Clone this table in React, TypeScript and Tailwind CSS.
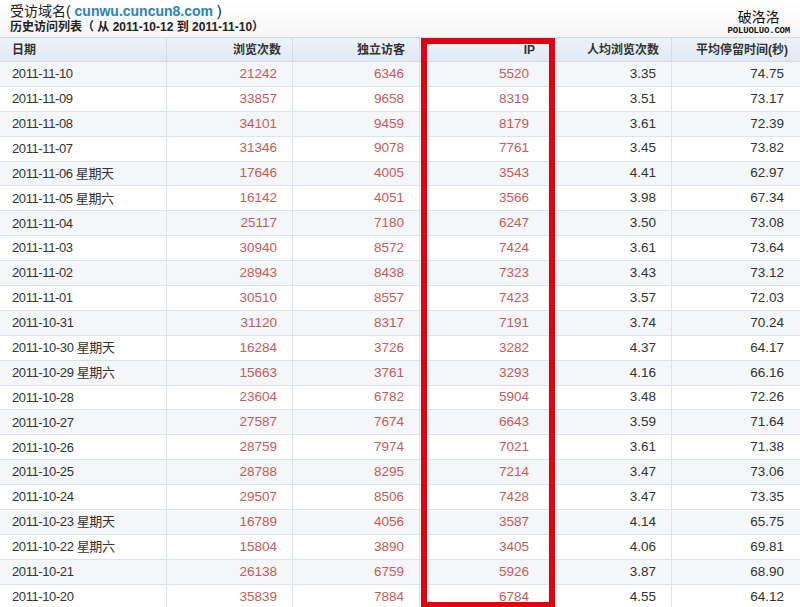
import React from 'react';

const rows: [string, string, string, string, string, string][] = [
  ['2011-11-10', '21242', '6346', '5520', '3.35', '74.75'],
  ['2011-11-09', '33857', '9658', '8319', '3.51', '73.17'],
  ['2011-11-08', '34101', '9459', '8179', '3.61', '72.39'],
  ['2011-11-07', '31346', '9078', '7761', '3.45', '73.82'],
  ['2011-11-06 星期天', '17646', '4005', '3543', '4.41', '62.97'],
  ['2011-11-05 星期六', '16142', '4051', '3566', '3.98', '67.34'],
  ['2011-11-04', '25117', '7180', '6247', '3.50', '73.08'],
  ['2011-11-03', '30940', '8572', '7424', '3.61', '73.64'],
  ['2011-11-02', '28943', '8438', '7323', '3.43', '73.12'],
  ['2011-11-01', '30510', '8557', '7423', '3.57', '72.03'],
  ['2011-10-31', '31120', '8317', '7191', '3.74', '70.24'],
  ['2011-10-30 星期天', '16284', '3726', '3282', '4.37', '64.17'],
  ['2011-10-29 星期六', '15663', '3761', '3293', '4.16', '66.16'],
  ['2011-10-28', '23604', '6782', '5904', '3.48', '72.26'],
  ['2011-10-27', '27587', '7674', '6643', '3.59', '71.64'],
  ['2011-10-26', '28759', '7974', '7021', '3.61', '71.38'],
  ['2011-10-25', '28788', '8295', '7214', '3.47', '73.06'],
  ['2011-10-24', '29507', '8506', '7428', '3.47', '73.35'],
  ['2011-10-23 星期天', '16789', '4056', '3587', '4.14', '65.75'],
  ['2011-10-22 星期六', '15804', '3890', '3405', '4.06', '69.81'],
  ['2011-10-21', '26138', '6759', '5926', '3.87', '68.90'],
  ['2011-10-20', '35839', '7884', '6784', '4.55', '64.12'],
];

const cols = 'grid grid-cols-[167px_126px_127px_135px_117px_128px]';
const font = { cjk: "font-['Liberation_Sans','Noto_Sans_CJK_SC',sans-serif]" };

export default function App() {
  return (
    <div className={`relative w-[800px] h-[607px] overflow-hidden bg-white ${font.cjk}`}>
      {/* title */}
      <div className="relative h-[37px] bg-gradient-to-b from-white to-[#f6f6f6] pl-[10px] pt-[3px]">
        <div className="text-[14px] leading-[16px] text-[#222]">
          受访域名(<span className="font-bold text-[#2b84b8]"> cunwu.cuncun8.com </span>)
        </div>
        <div className="mt-[1px] text-[12px] leading-[14px] font-bold text-[#222]">
          历史访问列表（ 从 2011-10-12 到 2011-11-10）
        </div>
        <div className="absolute right-[10px] top-[9px] flex flex-col items-center">
          <span className="text-[14px] leading-[16px] text-[#111]">破洛洛</span>
          <span className="mt-[1px] font-['Liberation_Mono',monospace] text-[9px] leading-[10px] font-bold tracking-[-0.2px] text-[#111]">POLUOLUO.COM</span>
        </div>
      </div>

      {/* header */}
      <div className={`${cols} h-[25px] border-y border-[#cfd9e6] bg-gradient-to-b from-[#eef3f9] to-[#e1e9f3] text-[12px] font-bold text-[#333]`}>
        <div className="flex items-center pl-[12px] border-r border-[#d3dce8]">日期</div>
        <div className="flex items-center justify-end pr-[11px] border-r border-[#d3dce8]">浏览次数</div>
        <div className="flex items-center justify-end pr-[14px] border-r border-[#d3dce8]">独立访客</div>
        <div className="flex items-center justify-end pr-[19px] border-r border-[#d3dce8]">IP</div>
        <div className="flex items-center justify-end pr-[12px] border-r border-[#d3dce8]">人均浏览次数</div>
        <div className="flex items-center justify-end pr-[12px]">平均停留时间(秒)</div>
      </div>

      {/* rows */}
      {rows.map((r, i) => (
        <div
          key={r[0]}
          className={`${cols} h-[24.9px] border-b border-[#dde3ec] ${i % 2 === 0 ? 'bg-[#f5f6f8]' : 'bg-white'}`}
        >
          <div className="flex items-center pl-[12px] border-r border-[#dbe2ec] text-[13px] tracking-[-0.4px] text-[#333]">{r[0]}</div>
          <div className="flex items-center justify-end pr-[15px] border-r border-[#dbe2ec] text-[13.5px] text-[#c65b5b]">{r[1]}</div>
          <div className="flex items-center justify-end pr-[15px] border-r border-[#dbe2ec] text-[13.5px] text-[#c65b5b]">{r[2]}</div>
          <div className="flex items-center justify-end pr-[25px] border-r border-[#dbe2ec] text-[13.5px] text-[#c65b5b]">{r[3]}</div>
          <div className="flex items-center justify-end pr-[15px] border-r border-[#dbe2ec] text-[13.5px] text-[#333]">{r[4]}</div>
          <div className="flex items-center justify-end pr-[16px] text-[13.5px] text-[#333]">{r[5]}</div>
        </div>
      ))}

      {/* red highlight box */}
      <div className="absolute left-[421px] top-[38px] w-[134px] h-[570px] border-[6px] border-[#e2000f]" />
    </div>
  );
}
